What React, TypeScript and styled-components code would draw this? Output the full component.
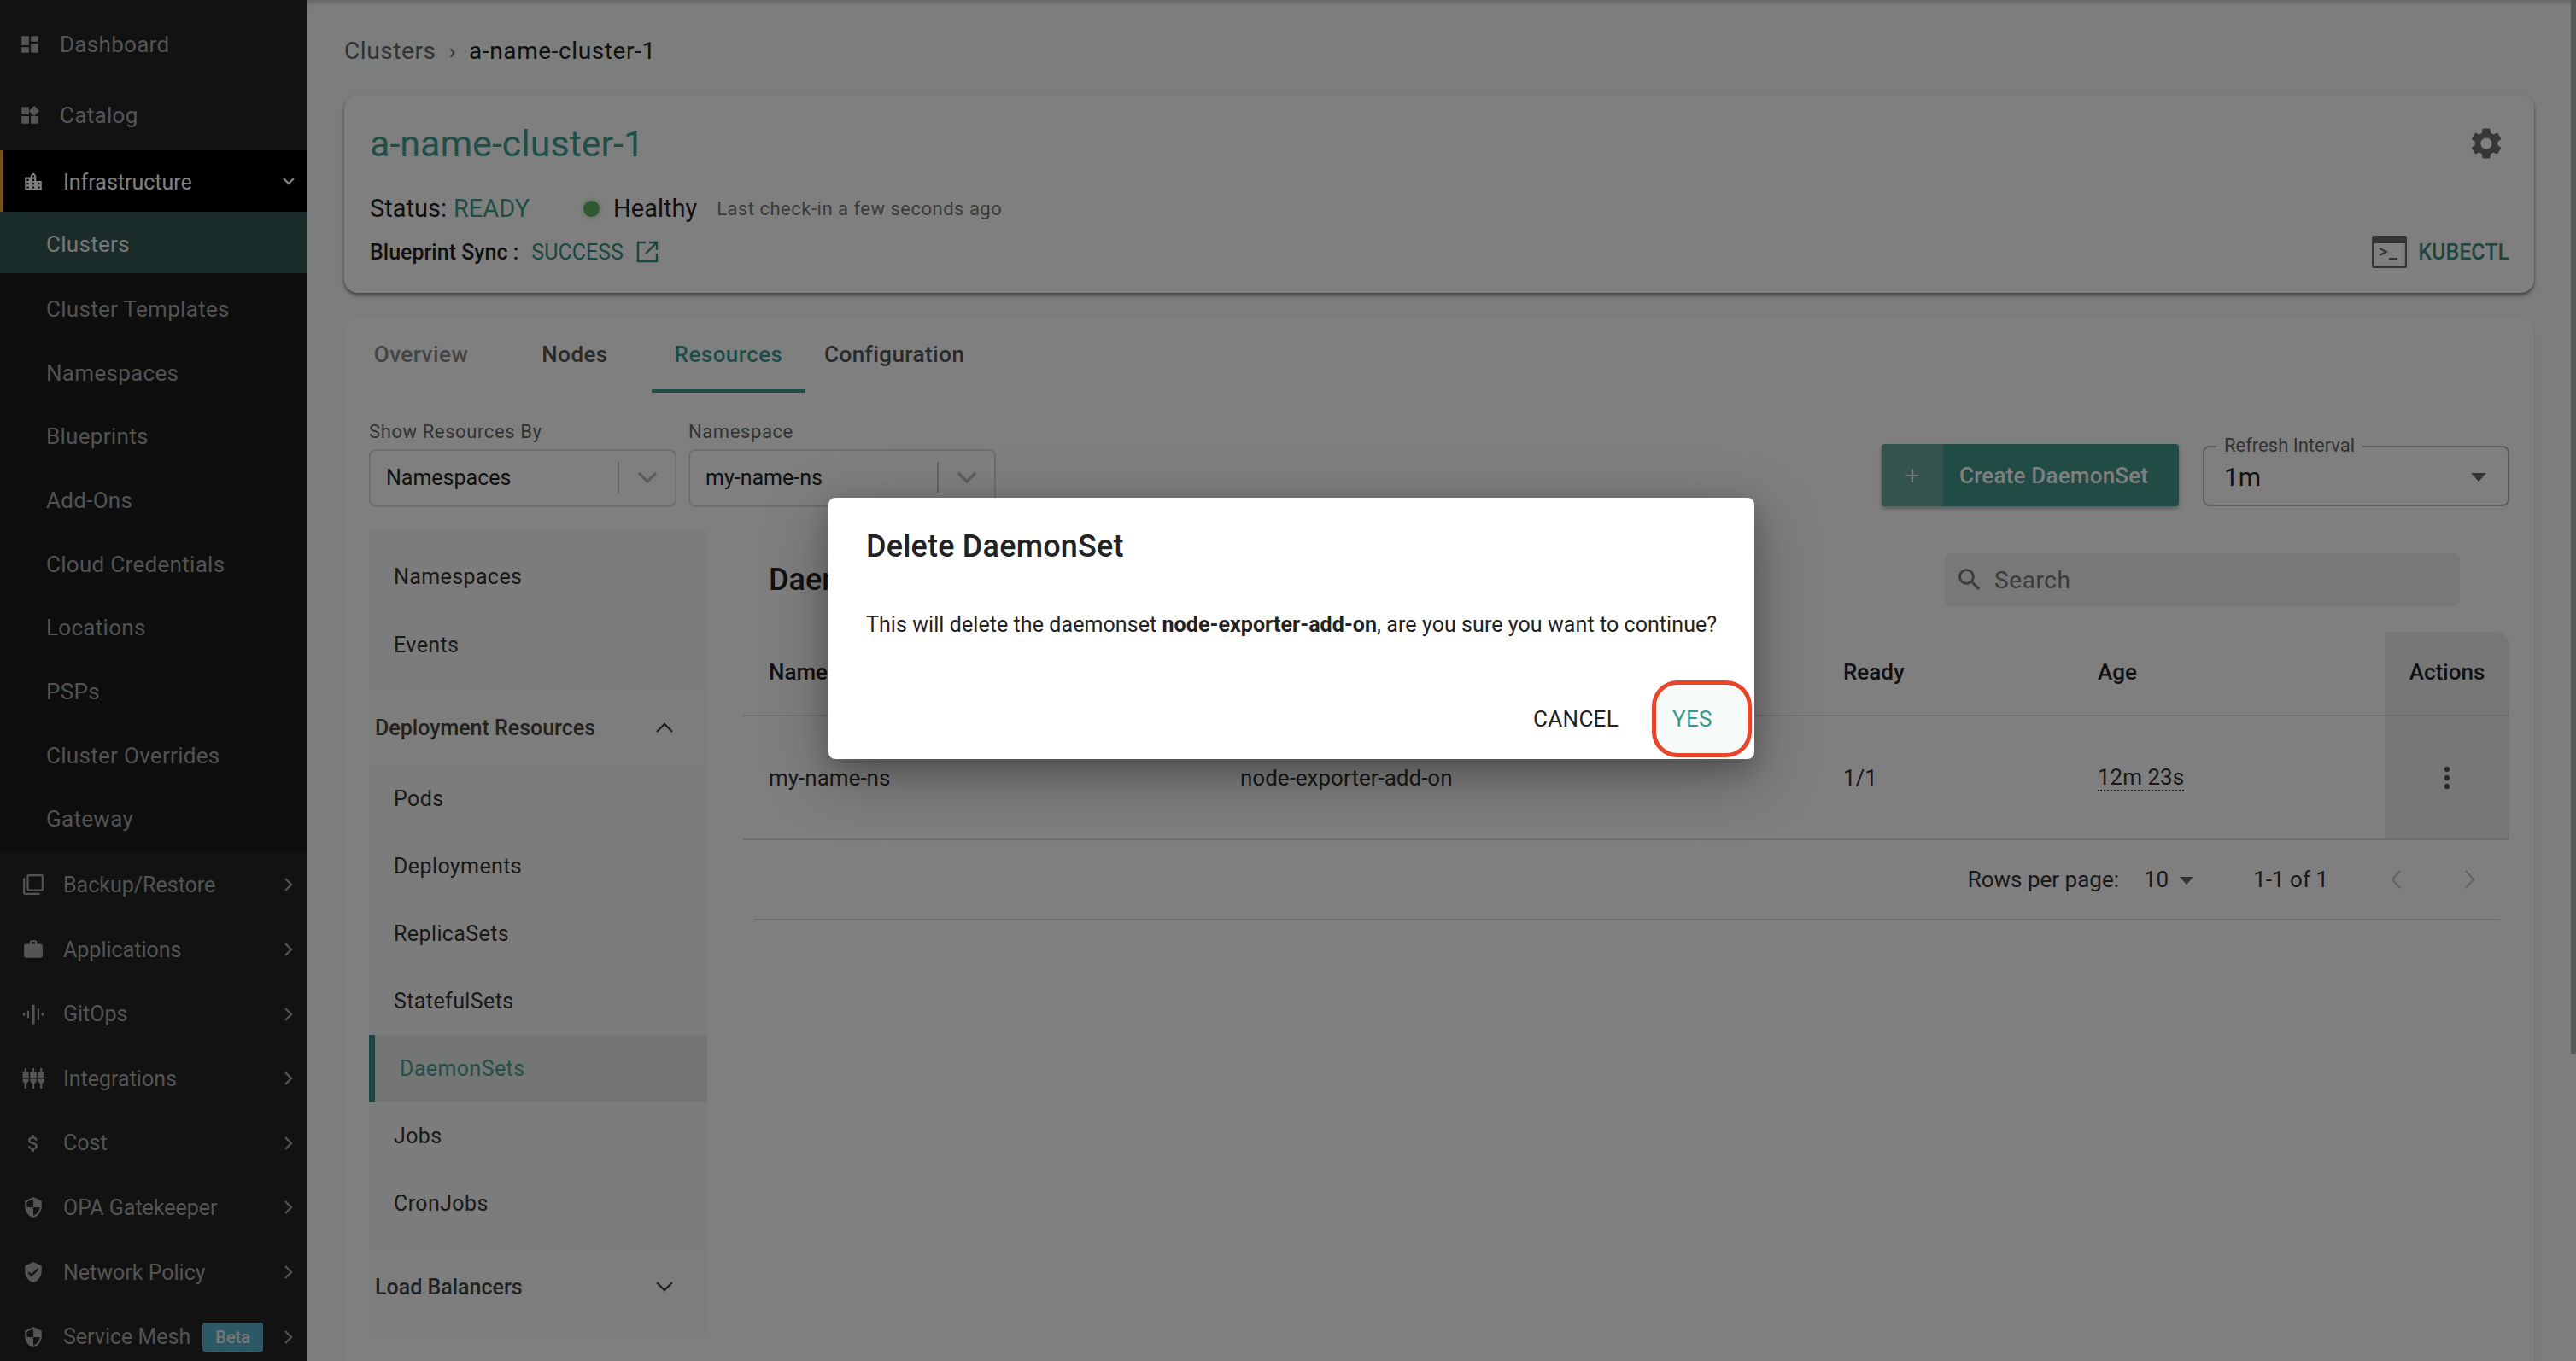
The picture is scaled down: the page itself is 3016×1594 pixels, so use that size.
import React from "react";
import styled, { createGlobalStyle } from "styled-components";

const GlobalStyle = createGlobalStyle`
  html, body { margin: 0; padding: 0; height: 100%; }
  body { font-family: Roboto, "Liberation Sans", sans-serif; background: #f8fafa; color: #222; }
  * { box-sizing: border-box; }
`;

const Page = styled.div`
  position: relative;
  display: flex;
  width: 3016px;
  height: 1594px;
  overflow: hidden;
`;

/* sidebar */
const Sidebar = styled.nav`
  flex: 0 0 360px;
  display: flex;
  flex-direction: column;
  padding-top: 10px;
  background: #242424;
  overflow: hidden;
`;

const TopItem = styled.div<{ $h?: number }>`
  display: flex;
  align-items: center;
  height: ${(p) => p.$h ?? 75.6}px;
  flex: none;
  padding: 1px 0 0 26px;
  color: #a8a8a8;
  font-size: 25px;
`;

const PlainItem = styled(TopItem)`
  padding-left: 22px;
  padding-top: 1px;
  font-size: 26px;
  letter-spacing: 0.3px;
`;

const OpenItem = styled(TopItem)`
  padding-left: 23px;
  padding-top: 2px;
  background: #000;
  border-left: 3px solid #f2a33a;
  color: #fff;
`;

const IconSlot = styled.span`
  display: flex;
  align-items: center;
  justify-content: center;
  flex: none;
  width: 26px;
  margin-right: 22px;
  svg { display: block; fill: currentColor; }
`;

const Chevron = styled.svg`
  flex: none;
  margin-left: auto;
  margin-right: 15px;
  fill: none;
  stroke: currentColor;
  stroke-width: 2.4;
`;

const OpenChevron = styled(Chevron)`
  margin-right: 12px;
`;

const SubList = styled.div`
  display: flex;
  flex-direction: column;
  background: #1c1c1c;
  padding-bottom: 2px;
`;

const SubItem = styled.div<{ $active?: boolean }>`
  display: flex;
  align-items: center;
  flex: none;
  height: ${(p) => (p.$active ? 72 : 74.7)}px;
  margin-bottom: ${(p) => (p.$active ? 4 : 0)}px;
  padding-left: 54px;
  padding-top: ${(p) => (p.$active ? 4 : 1)}px;
  font-size: 26px;
  letter-spacing: 0.3px;
  color: ${(p) => (p.$active ? "#eeeeee" : "#a4a4a4")};
  background: ${(p) => (p.$active ? "#345854" : "transparent")};
`;

const BetaTag = styled.span`
  display: inline-flex;
  align-items: center;
  height: 34px;
  margin-left: 14px;
  padding: 0 15px;
  border-radius: 3px;
  background: #56b4cc;
  color: #eee;
  font-size: 20px;
  font-weight: 500;
`;

/* main */
const Main = styled.main`
  flex: 1;
  min-width: 0;
  padding: 0 49px 0 43px;
  box-shadow: inset 0 7px 6px -5px rgba(0, 0, 0, 0.25);
`;

const Crumbs = styled.div`
  display: flex;
  align-items: center;
  height: 111px;
  padding-top: 8px;
  font-size: 28px;
  letter-spacing: 0.6px;
  color: #666;
`;

const CrumbSep = styled.span`
  margin: 0 15px 0 15px;
  font-size: 26px;
`;

const CrumbNow = styled.span`
  color: #222;
`;

const HeaderCard = styled.section`
  display: flex;
  flex-direction: column;
  height: 232px;
  padding: 33px 29px 0 30px;
  border-radius: 16px;
  background: #fff;
  box-shadow: 0 3px 4px rgba(0, 0, 0, 0.45), 0 0 2px rgba(0, 0, 0, 0.08);
`;

const HeaderRow = styled.div`
  display: flex;
  align-items: center;
  justify-content: space-between;
`;

const SyncRow = styled(HeaderRow)`
  margin-top: 11px;
`;

const ClusterTitle = styled.h1`
  margin: 0;
  font-size: 43px;
  font-weight: 400;
  line-height: 48px;
  color: #3f9f8e;
`;

const Gear = styled.svg`
  margin-right: 5px;
  fill: #6e6e6e;
`;

const StatusRow = styled.div`
  display: flex;
  align-items: center;
  height: 40px;
  margin-top: 32px;
  font-size: 29px;
  color: #222;
`;

const Ready = styled.span`
  margin-left: 8px;
  color: #3f9f8e;
`;

const HealthDot = styled.span`
  width: 19px;
  height: 19px;
  margin: 0 16px 0 63px;
  border-radius: 50%;
  background: #5fb25f;
  box-shadow: 0 0 6px rgba(95, 178, 95, 0.6);
`;

const CheckIn = styled.span`
  margin-left: 23px;
  font-size: 22px;
  letter-spacing: 0.5px;
  color: #777;
`;

const SyncLeft = styled.div`
  display: flex;
  align-items: center;
  height: 40px;
  font-size: 25px;
  font-weight: 500;
  color: #222;
`;

const SyncValue = styled.span`
  margin: 0 15px;
  font-weight: 400;
  color: #3a8c80;
`;

const Kubectl = styled.div`
  display: flex;
  align-items: center;
  gap: 13px;
  font-size: 25px;
  font-weight: 500;
  color: #3a8c80;
`;

const ResourcesCard = styled.section`
  height: 1300px;
  margin-top: 29px;
  border-radius: 16px;
  background: #fff;
  box-shadow: 0 1px 3px rgba(0, 0, 0, 0.12);
`;

const Tabs = styled.div`
  display: flex;
  height: 88px;
`;

const Tab = styled.div<{ $active?: boolean; $muted?: boolean }>`
  display: flex;
  align-items: center;
  justify-content: center;
  min-width: 180px;
  padding: 2px 22px 0;
  border-bottom: 4px solid ${(p) => (p.$active ? "#3f9a8d" : "transparent")};
  font-size: 26px;
  font-weight: 500;
  letter-spacing: 0.45px;
  color: ${(p) => (p.$active ? "#3f9a8d" : p.$muted ? "#888" : "#555")};
`;

const FilterRow = styled.div`
  display: flex;
  align-items: flex-end;
  margin-top: 34px;
  padding: 0 29px;
`;

const Field = styled.div`
  width: 360px;
  margin-right: 14px;
`;

const FieldLabel = styled.div`
  height: 24px;
  margin-bottom: 8px;
  font-size: 22px;
  line-height: 24px;
  letter-spacing: 0.6px;
  color: #666;
`;

const SelectBox = styled.div`
  display: flex;
  align-items: center;
  height: 68px;
  padding: 0 0 2px 18px;
  border: 2px solid #dcdcdc;
  border-radius: 8px;
  font-size: 25px;
  color: #222;
`;

const SelectDivider = styled.span`
  width: 2px;
  height: 36px;
  margin-left: auto;
  background: #c8c8c8;
`;

const SelectArrow = styled.svg`
  flex: none;
  margin: 0 20px 0 21px;
  fill: none;
  stroke: #bdbdbd;
  stroke-width: 3.4;
`;

const RightTools = styled.div`
  display: flex;
  align-items: flex-end;
  gap: 28px;
  margin-left: auto;
  padding-bottom: 1px;
`;

const CreateButton = styled.div`
  display: flex;
  align-items: stretch;
  width: 348px;
  height: 73px;
  border-radius: 4px;
  overflow: hidden;
  background: #42968a;
  color: #fff;
  font-size: 26px;
  font-weight: 500;
  letter-spacing: 0.2px;
  box-shadow: 0 3px 5px rgba(0, 0, 0, 0.3);
`;

const CreatePlus = styled.span`
  display: flex;
  align-items: center;
  justify-content: center;
  width: 72px;
  background: #6aa89f;
  font-size: 30px;
  font-weight: 300;
`;

const CreateLabel = styled.span`
  display: flex;
  align-items: center;
  padding-left: 19px;
`;

const RefreshBox = styled.div`
  position: relative;
  display: flex;
  align-items: center;
  justify-content: space-between;
  width: 359px;
  height: 71px;
  padding: 2px 25px 0 23px;
  border: 2px solid #bbbbbb;
  border-radius: 8px;
  font-size: 30px;
  color: #222;
`;

const RefreshLabel = styled.span`
  position: absolute;
  top: -15px;
  left: 14px;
  padding: 0 9px;
  background: #fff;
  font-size: 22px;
  line-height: 26px;
  color: #666;
`;

const Caret = styled.span`
  width: 0;
  height: 0;
  border-left: 9px solid transparent;
  border-right: 9px solid transparent;
  border-top: 10px solid #666;
`;

const BodyGrid = styled.div`
  display: grid;
  grid-template-columns: 396px 1fr;
  column-gap: 42px;
  padding: 0 29px;
`;

const SideMenu = styled.div`
  margin-top: 28px;
  padding-bottom: 12px;
  background: #fbfbfb;
`;

const MenuPlain = styled.div`
  padding: 13px 0;
  background: #f8f8f8;
`;

const MenuSub = styled.div`
  padding-bottom: 14px;
  background: #f8f8f8;
`;

const MenuLink = styled.div<{ $active?: boolean; $h?: number }>`
  display: flex;
  align-items: center;
  height: ${(p) => p.$h ?? 79}px;
  padding-left: 29px;
  border-left: ${(p) => (p.$active ? "7px" : "0")} solid #3f8c80;
  font-size: 25px;
  letter-spacing: 0.4px;
  color: ${(p) => (p.$active ? "#4d9e92" : "#333")};
  background: ${(p) => (p.$active ? "#e6edeb" : "transparent")};
`;

const MenuGroup = styled.div`
  display: flex;
  align-items: center;
  justify-content: space-between;
  height: 88px;
  padding: 0 38px 0 7px;
  font-size: 25px;
  font-weight: 500;
  color: #444;
`;

const MenuGroupChevron = styled.svg`
  fill: none;
  stroke: #444;
  stroke-width: 2.4;
`;

const TablePanel = styled.div`
  margin-top: 54px;
`;

const TableTop = styled.div`
  display: flex;
  align-items: center;
  justify-content: space-between;
  height: 62px;
  padding: 0 58px 0 30px;
  margin-bottom: 30px;
`;

const TableHeading = styled.h2`
  margin: 0;
  font-size: 36px;
  font-weight: 500;
  color: #222;
`;

const SearchBox = styled.div`
  display: flex;
  align-items: center;
  width: 603px;
  height: 62px;
  padding-left: 12px;
  border-radius: 8px;
  background: #f0f0f0;
  font-size: 28px;
  letter-spacing: 0.6px;
  color: #777;
`;

const SearchIcon = styled.svg`
  margin-right: 12px;
  fill: #777;
`;

const TableGrid = styled.div`
  display: grid;
  grid-template-columns: 552px 706px 298px 366px 146px;
  grid-template-rows: 99px 145px;
`;

const HeadCell = styled.div`
  display: flex;
  align-items: center;
  padding: 0 0 4px 30px;
  border-bottom: 2px solid #dfdfdf;
  font-size: 26px;
  font-weight: 500;
  color: #222;
`;

const ActionsHead = styled(HeadCell)`
  justify-content: center;
  padding-left: 0;
  border-top-right-radius: 16px;
  background: #eeeeee;
`;

const BodyCell = styled.div`
  display: flex;
  align-items: center;
  padding: 0 0 0 30px;
  border-bottom: 2px solid #dfdfdf;
  font-size: 26px;
  color: #333;
`;

const ActionsCell = styled(BodyCell)`
  justify-content: center;
  padding-left: 0;
  background: #eeeeee;
`;

const AgeText = styled.span`
  border-bottom: 2px dotted #333;
  line-height: 30px;
`;

const Kebab = styled.svg`
  fill: #555;
`;

const Pagination = styled.div`
  display: flex;
  align-items: center;
  justify-content: flex-end;
  height: 94px;
  margin: 0 11px 0 12px;
  padding-right: 28px;
  border-bottom: 2px solid #dfdfdf;
  font-size: 26px;
  color: #333;
`;

const RowsValue = styled.span`
  margin-left: 29px;
`;

const SmallCaret = styled(Caret)`
  margin: 2px 0 0 13px;
  border-left-width: 8px;
  border-right-width: 8px;
  border-top-width: 9px;
`;

const PageCount = styled.span`
  margin: 0 72px 0 70px;
`;

const PageArrow = styled.svg`
  fill: none;
  stroke: #c8c8c8;
  stroke-width: 2.4;
  margin-left: 73px;
  &:first-of-type { margin-left: 0; }
`;

/* dialog */
const Scrollbar = styled.span`
  position: absolute;
  top: 0;
  right: 0;
  width: 6px;
  height: 1235px;
  border-bottom-left-radius: 6px;
  border-bottom-right-radius: 6px;
  background: #aab2ae;
`;

const Backdrop = styled.div`
  position: absolute;
  inset: 0;
  display: flex;
  justify-content: center;
  align-items: flex-start;
  background: rgba(0, 0, 0, 0.5);
`;

const Dialog = styled.div`
  width: 1084px;
  height: 306px;
  margin: 583px 0 0 8px;
  padding-top: 35px;
  border-radius: 8px;
  background: #fff;
  box-shadow: 0 22px 70px 6px rgba(0, 0, 0, 0.25), 0 10px 28px rgba(0, 0, 0, 0.2);
`;

const DialogTitle = styled.h3`
  margin: 0;
  padding-left: 44px;
  font-size: 36px;
  font-weight: 500;
  letter-spacing: 0.2px;
  line-height: 44px;
  color: #222;
`;

const DialogText = styled.p`
  margin: 49px 0 0;
  padding: 1px 0 0 44px;
  font-size: 25px;
  line-height: 40px;
  letter-spacing: 0.07px;
  white-space: nowrap;
  color: #222;
`;

const DialogActions = styled.div`
  display: flex;
  justify-content: flex-end;
  margin-top: 50px;
  padding-right: 8px;
`;

const DialogButton = styled.div`
  position: relative;
  display: flex;
  align-items: center;
  height: 80px;
  padding: 0 20px;
  font-size: 26px;
  letter-spacing: 0.3px;
  color: #222;
`;

const CancelButton = styled(DialogButton)`
  margin-right: 24px;
`;

const YesButton = styled(DialogButton)`
  width: 107px;
  padding-left: 19px;
  border-radius: 22px;
  background: #f6faf9;
  color: #35998a;
`;

const CalloutRing = styled.span`
  position: absolute;
  inset: -5px;
  border: 5px solid #e8462b;
  border-radius: 30px;
`;

const icons = {
  dashboard: "M3 13h8V3H3v10zm0 8h8v-6H3v6zm10 0h8V11h-8v10zm0-18v6h8V3h-8z",
  widgets: "M13 13v8h8v-8h-8zM3 21h8v-8H3v8zM3 3v8h8V3H3zm13.66-1.31L11 7.34 16.66 13l5.66-5.66-5.66-5.65z",
  city: "M15 11V5l-3-3-3 3v2H3v14h18V11h-6zm-8 8H5v-2h2v2zm0-4H5v-2h2v2zm0-4H5V9h2v2zm6 8h-2v-2h2v2zm0-4h-2v-2h2v2zm0-4h-2V9h2v2zm0-4h-2V5h2v2zm6 12h-2v-2h2v2zm0-4h-2v-2h2v2z",
  backup: "M3 5H1v16c0 1.1.9 2 2 2h16v-2H3V5zm18-4H7c-1.1 0-2 .9-2 2v14c0 1.1.9 2 2 2h14c1.1 0 2-.9 2-2V3c0-1.1-.9-2-2-2zm0 16H7V3h14v14z",
  work: "M20 6h-4V4c0-1.11-.89-2-2-2h-4c-1.11 0-2 .89-2 2v2H4c-1.11 0-1.99.89-1.99 2L2 19c0 1.11.89 2 2 2h16c1.11 0 2-.89 2-2V8c0-1.11-.89-2-2-2zm-6 0h-4V4h4v2z",
  wave: "M1 10.5h2v3H1zM5.5 8h2v8h-2zM10.5 1.5h3v21h-3zM16.5 6h2v12h-2zM21 10.5h2v3h-2z",
  plugs: "M2.5 1h2v4H7v6H.5V5h2zM.5 12.5H7v2.5L4.5 18v5h-2v-5L.5 15zM11 1h2v4h2.5v6H8.5V5H11zM8.5 12.5h7V15L13 18v5h-2v-5l-2.5-3zM19.5 1h2v4H24v6h-7V5h2.5zM17 12.5h7V15l-2.5 3v5h-2v-5L17 15z",
  money: "M11.8 10.9c-2.27-.59-3-1.2-3-2.15 0-1.09 1.01-1.85 2.7-1.85 1.78 0 2.44.85 2.5 2.1h2.21c-.07-1.72-1.12-3.3-3.21-3.81V3h-3v2.16c-1.94.42-3.5 1.68-3.5 3.61 0 2.31 1.91 3.46 4.7 4.13 2.5.6 3 1.48 3 2.41 0 .69-.49 1.79-2.7 1.79-2.06 0-2.87-.92-2.98-2.1h-2.2c.12 2.19 1.76 3.42 3.68 3.83V21h3v-2.15c1.95-.37 3.5-1.5 3.5-3.55 0-2.84-2.43-3.81-4.7-4.4z",
  shield: "M12 1L3 5v6c0 5.55 3.84 10.74 9 12 5.16-1.26 9-6.45 9-12V5l-9-4zm0 10.99h7c-.53 4.12-3.28 7.79-7 8.94V12H5V6.3l7-3.11v8.8z",
  verified: "M12 1L3 5v6c0 5.55 3.84 10.74 9 12 5.16-1.26 9-6.45 9-12V5l-9-4zm-2 16l-4-4 1.41-1.41L10 14.17l6.59-6.59L18 9l-8 8z",
  gear: "M19.14,12.94c0.04-0.3,0.06-0.61,0.06-0.94c0-0.32-0.02-0.64-0.07-0.94l2.03-1.58c0.18-0.14,0.23-0.41,0.12-0.61 l-1.92-3.32c-0.12-0.22-0.37-0.29-0.59-0.22l-2.39,0.96c-0.5-0.38-1.03-0.7-1.62-0.94L14.4,2.81c-0.04-0.24-0.24-0.41-0.48-0.41 h-3.84c-0.24,0-0.43,0.17-0.47,0.41L9.25,5.35C8.66,5.59,8.12,5.92,7.63,6.29L5.24,5.33c-0.22-0.08-0.47,0-0.59,0.22L2.74,8.87 C2.62,9.08,2.66,9.34,2.86,9.48l2.03,1.58C4.84,11.36,4.8,11.69,4.8,12s0.02,0.64,0.07,0.94l-2.03,1.58 c-0.18,0.14-0.23,0.41-0.12,0.61l1.92,3.32c0.12,0.22,0.37,0.29,0.59,0.22l2.39-0.96c0.5,0.38,1.03,0.7,1.62,0.94l0.36,2.54 c0.05,0.24,0.24,0.41,0.48,0.41h3.84c0.24,0,0.44-0.17,0.47-0.41l0.36-2.54c0.59-0.24,1.13-0.56,1.62-0.94l2.39,0.96 c0.22,0.08,0.47,0,0.59-0.22l1.92-3.32c0.12-0.22,0.07-0.47-0.12-0.61L19.14,12.94z M12,15.6c-1.98,0-3.6-1.62-3.6-3.6 s1.62-3.6,3.6-3.6s3.6,1.62,3.6,3.6S13.98,15.6,12,15.6z",
  search: "M15.5 14h-.79l-.28-.27C15.41 12.59 16 11.11 16 9.5 16 5.91 13.09 3 9.5 3S3 5.91 3 9.5 5.91 16 9.5 16c1.61 0 3.09-.59 4.23-1.57l.27.28v.79l5 4.99L20.49 19l-4.99-5zm-6 0C7.01 14 5 11.99 5 9.5S7.01 5 9.5 5 14 7.01 14 9.5 11.99 14 9.5 14z",
  kebab: "M12 8c1.1 0 2-.9 2-2s-.9-2-2-2-2 .9-2 2 .9 2 2 2zm0 2c-1.1 0-2 .9-2 2s.9 2 2 2 2-.9 2-2-.9-2-2-2zm0 6c-1.1 0-2 .9-2 2s.9 2 2 2 2-.9 2-2-.9-2-2-2z",
};

const NavIcon = ({ d, size = 26 }: { d: string; size?: number }) => (
  <IconSlot>
    <svg width={size} height={size} viewBox="0 0 24 24">
      <path d={d} />
    </svg>
  </IconSlot>
);

const RightChevron = () => (
  <Chevron width="14" height="20" viewBox="0 0 14 20">
    <path d="M3 3l7 7-7 7" />
  </Chevron>
);

const lowerNav = [
  { label: "Backup/Restore", icon: icons.backup },
  { label: "Applications", icon: icons.work },
  { label: "GitOps", icon: icons.wave },
  { label: "Integrations", icon: icons.plugs },
  { label: "Cost", icon: icons.money },
  { label: "OPA Gatekeeper", icon: icons.shield },
  { label: "Network Policy", icon: icons.verified },
];

const subNav = [
  "Cluster Templates",
  "Namespaces",
  "Blueprints",
  "Add-Ons",
  "Cloud Credentials",
  "Locations",
  "PSPs",
  "Cluster Overrides",
  "Gateway",
];

const SelectField = ({ label, value }: { label: string; value: string }) => (
  <Field>
    <FieldLabel>{label}</FieldLabel>
    <SelectBox>
      {value}
      <SelectDivider />
      <SelectArrow width="24" height="16" viewBox="0 0 24 16">
        <path d="M2 3l10 10L22 3" />
      </SelectArrow>
    </SelectBox>
  </Field>
);

const App = () => (
  <Page>
    <GlobalStyle />
    <Sidebar>
      <PlainItem $h={83}>
        <NavIcon d={icons.dashboard} />
        Dashboard
      </PlainItem>
      <PlainItem $h={83}>
        <NavIcon d={icons.widgets} />
        Catalog
      </PlainItem>
      <OpenItem $h={72}>
        <NavIcon d={icons.city} />
        Infrastructure
        <OpenChevron width="20" height="14" viewBox="0 0 20 14">
          <path d="M4 3l6 6 6-6" />
        </OpenChevron>
      </OpenItem>
      <SubList>
        <SubItem $active>Clusters</SubItem>
        {subNav.map((label) => (
          <SubItem key={label}>{label}</SubItem>
        ))}
      </SubList>
      {lowerNav.map((item) => (
        <TopItem key={item.label}>
          <NavIcon d={item.icon} />
          {item.label}
          <RightChevron />
        </TopItem>
      ))}
      <TopItem>
        <NavIcon d={icons.shield} />
        Service Mesh
        <BetaTag>Beta</BetaTag>
        <RightChevron />
      </TopItem>
    </Sidebar>

    <Main>
      <Crumbs>
        Clusters
        <CrumbSep>›</CrumbSep>
        <CrumbNow>a-name-cluster-1</CrumbNow>
      </Crumbs>

      <HeaderCard>
        <HeaderRow>
          <ClusterTitle>a-name-cluster-1</ClusterTitle>
          <Gear width="44" height="44" viewBox="0 0 24 24">
            <path d={icons.gear} />
          </Gear>
        </HeaderRow>
        <StatusRow>
          Status:
          <Ready>READY</Ready>
          <HealthDot />
          Healthy
          <CheckIn>Last check-in a few seconds ago</CheckIn>
        </StatusRow>
        <SyncRow>
          <SyncLeft>
            Blueprint Sync :
            <SyncValue>SUCCESS</SyncValue>
            <svg width="26" height="26" viewBox="0 0 26 26" fill="none" stroke="#3a8c80" strokeWidth="2.4">
              <path d="M11 2H2v22h22v-9M15 2h9v9M24 2L11 15" />
            </svg>
          </SyncLeft>
          <Kubectl>
            <svg width="41" height="38" viewBox="0 0 41 38">
              <rect x="1" y="1" width="39" height="36" rx="2" fill="none" stroke="#6a6a6a" strokeWidth="2.4" />
              <rect x="1" y="1" width="39" height="8" fill="#6a6a6a" />
              <path d="M9 15l8 4-8 4" fill="none" stroke="#6a6a6a" strokeWidth="2" />
              <path d="M20 27h10" stroke="#6a6a6a" strokeWidth="2" />
            </svg>
            KUBECTL
          </Kubectl>
        </SyncRow>
      </HeaderCard>

      <ResourcesCard>
        <Tabs>
          <Tab $muted>Overview</Tab>
          <Tab>Nodes</Tab>
          <Tab $active>Resources</Tab>
          <Tab>Configuration</Tab>
        </Tabs>

        <FilterRow>
          <SelectField label="Show Resources By" value="Namespaces" />
          <SelectField label="Namespace" value="my-name-ns" />
          <RightTools>
            <CreateButton>
              <CreatePlus>+</CreatePlus>
              <CreateLabel>Create DaemonSet</CreateLabel>
            </CreateButton>
            <RefreshBox>
              <RefreshLabel>Refresh Interval</RefreshLabel>
              1m
              <Caret />
            </RefreshBox>
          </RightTools>
        </FilterRow>

        <BodyGrid>
          <SideMenu>
            <MenuPlain>
              <MenuLink $h={80}>Namespaces</MenuLink>
              <MenuLink $h={80}>Events</MenuLink>
            </MenuPlain>
            <MenuGroup>
              Deployment Resources
              <MenuGroupChevron width="24" height="14" viewBox="0 0 24 14">
                <path d="M3 12l9-9 9 9" />
              </MenuGroupChevron>
            </MenuGroup>
            <MenuSub>
              <MenuLink>Pods</MenuLink>
              <MenuLink>Deployments</MenuLink>
              <MenuLink>ReplicaSets</MenuLink>
              <MenuLink>StatefulSets</MenuLink>
              <MenuLink $active>DaemonSets</MenuLink>
              <MenuLink>Jobs</MenuLink>
              <MenuLink>CronJobs</MenuLink>
            </MenuSub>
            <MenuGroup>
              Load Balancers
              <MenuGroupChevron width="24" height="14" viewBox="0 0 24 14">
                <path d="M3 2l9 9 9-9" />
              </MenuGroupChevron>
            </MenuGroup>
          </SideMenu>

          <TablePanel>
            <TableTop>
              <TableHeading>DaemonSets</TableHeading>
              <SearchBox>
                <SearchIcon width="34" height="34" viewBox="0 0 24 24">
                  <path d={icons.search} />
                </SearchIcon>
                Search
              </SearchBox>
            </TableTop>
            <TableGrid>
              <HeadCell>Namespace</HeadCell>
              <HeadCell>Name</HeadCell>
              <HeadCell>Ready</HeadCell>
              <HeadCell>Age</HeadCell>
              <ActionsHead>Actions</ActionsHead>
              <BodyCell>my-name-ns</BodyCell>
              <BodyCell>node-exporter-add-on</BodyCell>
              <BodyCell>1/1</BodyCell>
              <BodyCell>
                <AgeText>12m 23s</AgeText>
              </BodyCell>
              <ActionsCell>
                <Kebab width="40" height="40" viewBox="0 0 24 24">
                  <path d={icons.kebab} />
                </Kebab>
              </ActionsCell>
            </TableGrid>
            <Pagination>
              Rows per page:
              <RowsValue>10</RowsValue>
              <SmallCaret />
              <PageCount>1-1 of 1</PageCount>
              <PageArrow width="14" height="24" viewBox="0 0 14 24">
                <path d="M12 2L3 12l9 10" />
              </PageArrow>
              <PageArrow width="14" height="24" viewBox="0 0 14 24">
                <path d="M2 2l9 10-9 10" />
              </PageArrow>
            </Pagination>
          </TablePanel>
        </BodyGrid>
      </ResourcesCard>
    </Main>

    <Scrollbar />

    <Backdrop>
      <Dialog>
        <DialogTitle>Delete DaemonSet</DialogTitle>
        <DialogText>
          This will delete the daemonset <b>node-exporter-add-on</b>, are you sure you want to continue?
        </DialogText>
        <DialogActions>
          <CancelButton>CANCEL</CancelButton>
          <YesButton>
            YES
            <CalloutRing />
          </YesButton>
        </DialogActions>
      </Dialog>
    </Backdrop>
  </Page>
);

export default App;
